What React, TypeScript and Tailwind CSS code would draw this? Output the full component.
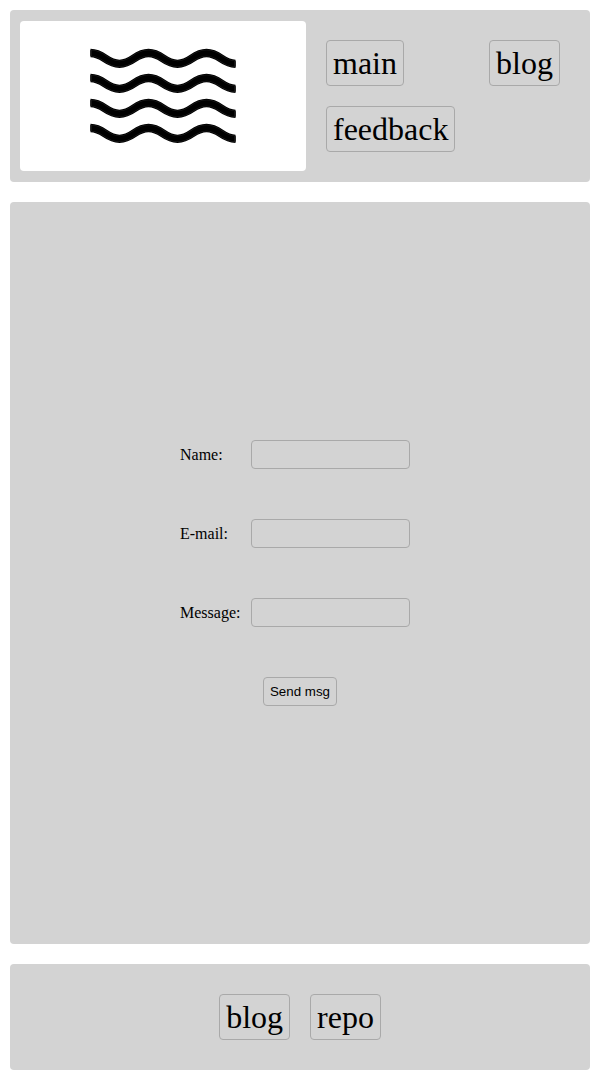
import type { ReactNode } from "react";

const waveRows = [32, 57, 82, 107];
const wave =
  "c13.5 0 15.5 10.8 29 10.8s15.5 -10.8 29 -10.8s15.5 10.8 29 10.8s15.5 -10.8 29 -10.8s15.5 10.8 29 10.8";

function NavLink({ children }: { children: ReactNode }) {
  return (
    <a
      href="#"
      className="block rounded border border-[#a9a9a9] px-1.5 py-1 text-[32px] leading-9"
    >
      {children}
    </a>
  );
}

function Logo() {
  return (
    <div className="flex h-[150px] w-[286px] shrink-0 justify-center rounded bg-white">
      <svg width="146" height="150" viewBox="0 0 146 150" fill="none" aria-hidden="true">
        {waveRows.map((y) => (
          <g key={y}>
            <path d={`M0.5 ${y}${wave}`} stroke="#000" strokeWidth="8.3" />
            <path d={`M0.5 ${y}${wave}`} stroke="#202020" strokeWidth="6.3" />
            <path d={`M0.5 ${y}${wave}`} stroke="#000" strokeWidth="5.3" />
            <path
              d={`M1.5 ${y - 3}v6M144.5 ${y + 7.8}v6`}
              stroke="#202020"
              strokeWidth="0.6"
            />
          </g>
        ))}
      </svg>
    </div>
  );
}

function Field({ label, name }: { label: string; name: string }) {
  return (
    <>
      <label htmlFor={name} className="text-base leading-[18px]">
        {label}
      </label>
      <input
        id={name}
        name={name}
        className="h-[29px] w-[159px] rounded border border-[#a9a9a9] bg-transparent px-1.5"
      />
    </>
  );
}

export default function App() {
  return (
    <div className="flex h-screen flex-col gap-5 bg-white p-2.5 font-['Liberation_Serif',serif] text-black">
      <header className="flex h-[172px] shrink-0 items-center rounded bg-[#d3d3d3] px-2.5">
        <Logo />
        <nav className="ml-5 mr-5 flex flex-1 flex-wrap justify-between gap-5">
          <NavLink>main</NavLink>
          <NavLink>blog</NavLink>
          <NavLink>feedback</NavLink>
        </nav>
      </header>
      <main className="flex flex-1 items-center justify-center rounded bg-[#d3d3d3]">
        <form className="flex w-60 flex-col items-center gap-[50px]">
          <div className="grid w-full grid-cols-[61px_159px] items-center gap-x-2.5 gap-y-[50px]">
            <Field label="Name:" name="name" />
            <Field label="E-mail:" name="email" />
            <Field label="Message:" name="message" />
          </div>
          <button
            type="button"
            className="h-[29px] rounded border border-[#a9a9a9] px-1.5 font-['Liberation_Sans',sans-serif] text-[13.333px] leading-[15px]"
          >
            Send msg
          </button>
        </form>
      </main>
      <footer className="flex h-[106px] shrink-0 items-center justify-center gap-5 rounded bg-[#d3d3d3]">
        <NavLink>blog</NavLink>
        <NavLink>repo</NavLink>
      </footer>
    </div>
  );
}
